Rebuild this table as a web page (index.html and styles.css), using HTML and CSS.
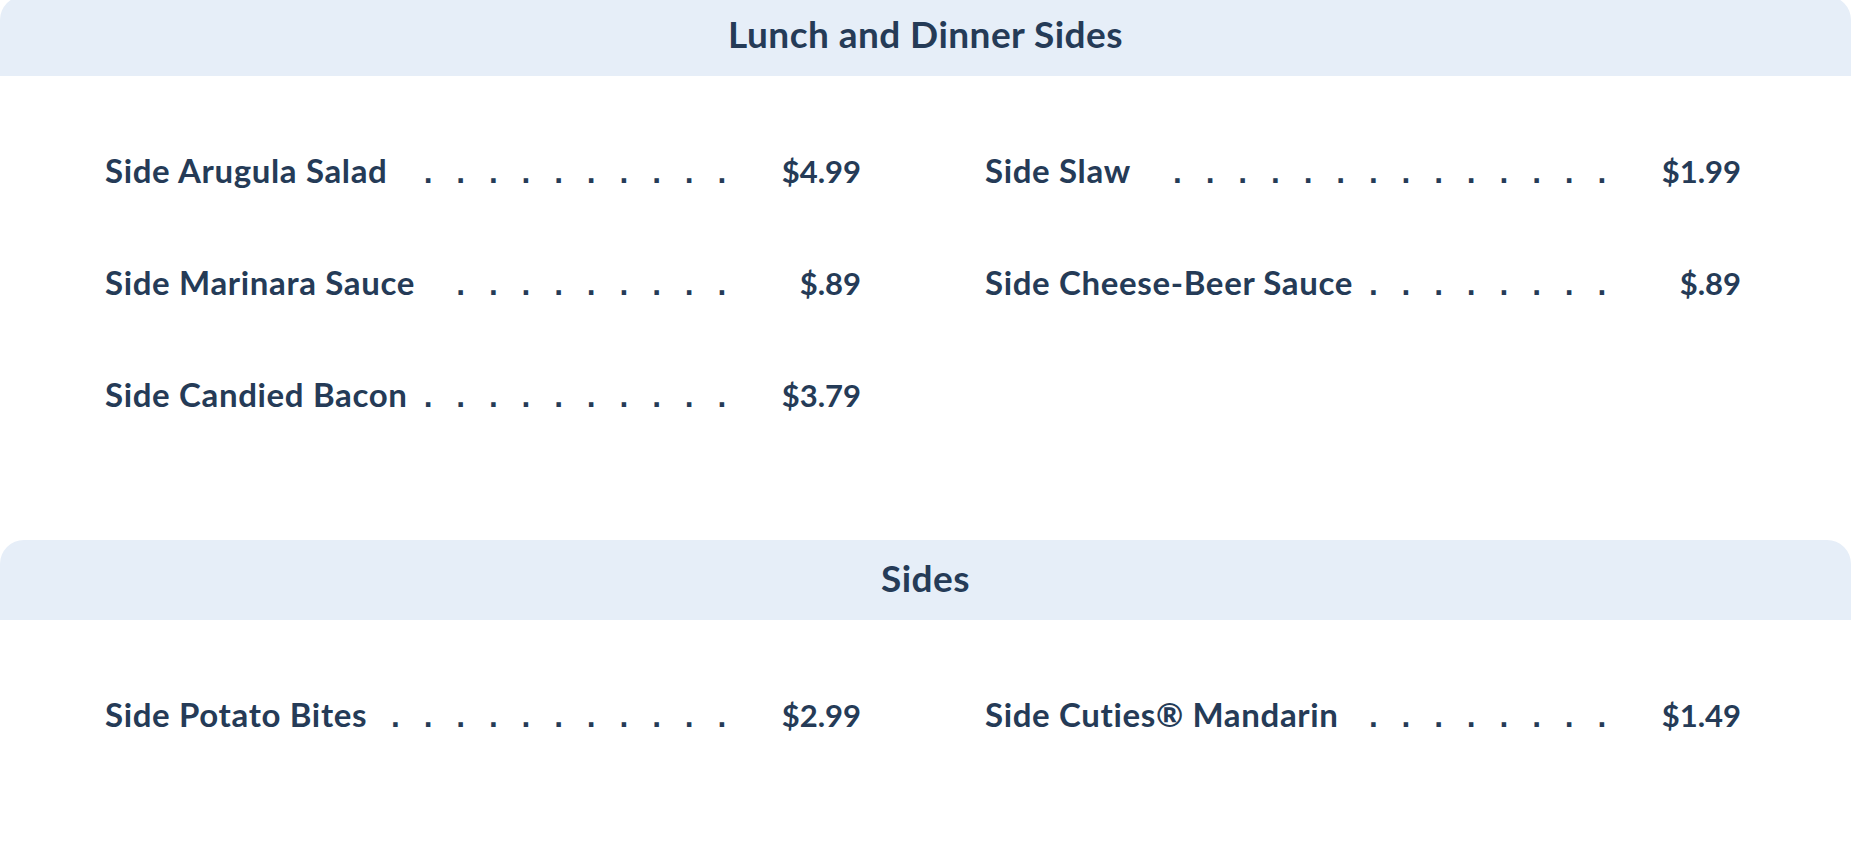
FILE: index.html
```html
<!DOCTYPE html>
<html lang="en">
<head>
<meta charset="utf-8">
<title>Sides Menu</title>
<link rel="stylesheet" href="styles.css">
</head>
<body>
<main class="menu">
  <section class="menu-section">
    <h2 class="section-title">Lunch and Dinner Sides</h2>
    <ul class="items">
      <li class="item"><span class="item-name">Side Arugula Salad</span><span class="leader">. . . . . . . . . . . . . . . . . . . .</span><span class="item-price">$4.99</span></li>
      <li class="item"><span class="item-name">Side Slaw</span><span class="leader">. . . . . . . . . . . . . . . . . . . .</span><span class="item-price">$1.99</span></li>
      <li class="item"><span class="item-name">Side Marinara Sauce</span><span class="leader">. . . . . . . . . . . . . . . . . . . .</span><span class="item-price">$.89</span></li>
      <li class="item"><span class="item-name">Side Cheese-Beer Sauce</span><span class="leader">. . . . . . . . . . . . . . . . . . . .</span><span class="item-price">$.89</span></li>
      <li class="item"><span class="item-name">Side Candied Bacon</span><span class="leader">. . . . . . . . . . . . . . . . . . . .</span><span class="item-price">$3.79</span></li>
    </ul>
  </section>
  <section class="menu-section">
    <h2 class="section-title">Sides</h2>
    <ul class="items">
      <li class="item"><span class="item-name">Side Potato Bites</span><span class="leader">. . . . . . . . . . . . . . . . . . . .</span><span class="item-price">$2.99</span></li>
      <li class="item"><span class="item-name">Side Cuties® Mandarin</span><span class="leader">. . . . . . . . . . . . . . . . . . . .</span><span class="item-price">$1.49</span></li>
    </ul>
  </section>
</main>
</body>
</html>
```

FILE: styles.css
```css
html, body {
  margin: 0;
  padding: 0;
  background: #ffffff;
}

body {
  font-family: "Lato", "Noto Sans", sans-serif;
  color: #253b57;
  overflow: hidden;
}

.menu {
  margin-top: -4px;
  display: flex;
  flex-direction: column;
}

.section-title {
  margin: 0;
  height: 80px;
  box-sizing: border-box;
  padding-bottom: 6px;
  display: flex;
  align-items: center;
  justify-content: center;
  background: #e6eef8;
  border-radius: 24px 24px 0 0;
  font-size: 37px;
  font-weight: 700;
  letter-spacing: 0.45px;
  line-height: 1;
}

.items {
  list-style: none;
  margin: 0;
  padding: 74px 110px 126px 105px;
  display: grid;
  grid-template-columns: 1fr 1fr;
  column-gap: 124px;
  row-gap: 72px;
}

.item {
  display: flex;
  align-items: baseline;
  height: 40px;
  font-size: 33px;
  font-weight: 700;
  line-height: 40px;
}

.item-name {
  flex: none;
  white-space: nowrap;
  letter-spacing: 0.65px;
}

.leader {
  flex: 1;
  min-width: 0;
  height: 40px;
  overflow: hidden;
  margin-left: 10px;
  text-align: right;
  font-family: "DejaVu Sans Mono", monospace;
  font-size: 27.12px;
  font-weight: 700;
  line-height: 40px;
}

.item-price {
  flex: none;
  width: 131px;
  text-align: right;
  white-space: nowrap;
  font-size: 31px;
}
```
